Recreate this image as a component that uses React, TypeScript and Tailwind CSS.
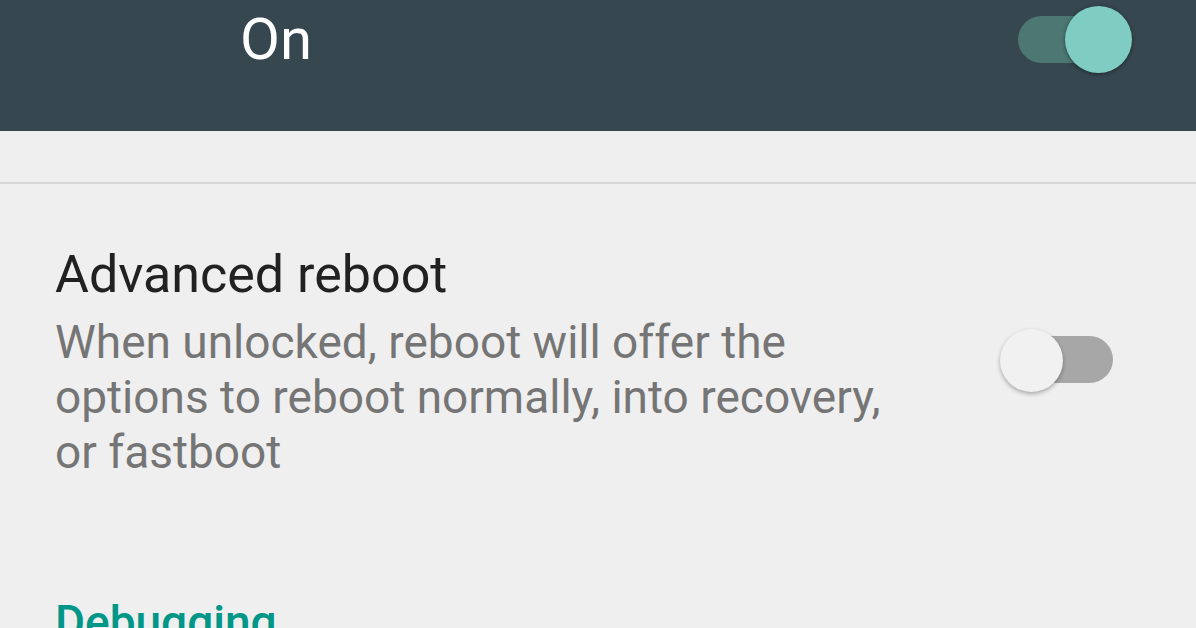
import React from 'react';

const font = { fontFamily: 'Roboto, "Noto Sans", sans-serif' };

function Toggle({ on }: { on: boolean }) {
  return (
    <div className="relative h-[67px] w-[132px] shrink-0">
      {on ? (
        <>
          <div className="absolute left-[18px] right-[19px] top-[10px] h-[47px] rounded-full bg-[#4d7773]" />
          <div className="absolute right-0 top-0 h-[67px] w-[67px] rounded-full bg-[#7fcdc2] shadow-[0_1px_4px_rgba(0,0,0,0.45)]" />
        </>
      ) : (
        <>
          <div className="absolute left-[5px] right-[19px] top-[8px] h-[47px] rounded-full bg-[#a7a7a7]" />
          <div className="absolute left-0 top-[1px] h-[63px] w-[63px] rounded-full bg-[#f1f1f1] shadow-[0_2px_4px_rgba(0,0,0,0.3)]" />
        </>
      )}
    </div>
  );
}

export default function App() {
  return (
    <div className="h-[628px] w-[1196px] overflow-hidden bg-[#efefef]" style={font}>
      <div className="h-[131px] bg-[#37474f]">
        <div className="flex h-[78px] items-center justify-between pl-[240px] pr-[64px]">
          <span className="text-[58px] leading-none text-white">On</span>
          <Toggle on />
        </div>
      </div>
      <div className="h-[51px]" />
      <div className="h-[2px] bg-[#d8d8d8]" />

      <div className="flex justify-between pl-[55px] pr-[64px] pt-[61px]">
        <div>
          <div className="text-[52px] leading-[60px] text-[#212121]">Advanced reboot</div>
          <div className="mt-[10px] text-[46px] leading-[55px] text-[#757575]">
            <div>When unlocked, reboot will offer the</div>
            <div>options to reboot normally, into recovery,</div>
            <div>or fastboot</div>
          </div>
        </div>
        <div className="mt-[83px]">
          <Toggle on={false} />
        </div>
      </div>

      <div className="mt-[115px] pl-[55px] text-[46px] font-medium leading-[55px] text-[#009688]">Debugging</div>
    </div>
  );
}
